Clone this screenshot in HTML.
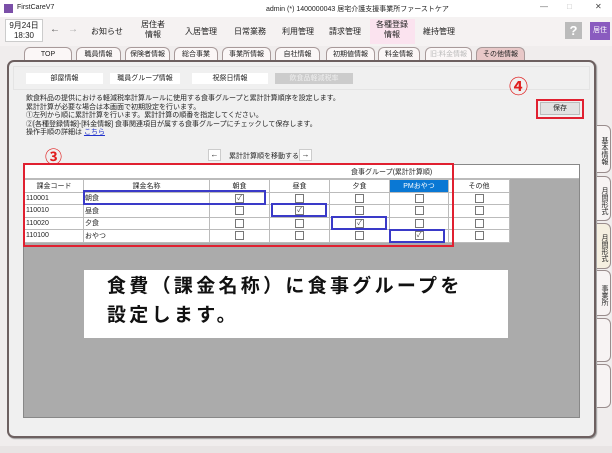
<!DOCTYPE html>
<html><head><meta charset="utf-8"><style>
*{margin:0;padding:0;box-sizing:border-box}
body{width:612px;height:453px;overflow:hidden;background:#f0eded;font-family:"Liberation Sans","Noto Sans CJK JP",sans-serif;position:relative;color:#222}
.a{position:absolute}
.t{font-size:8px;white-space:nowrap}
.tab{position:absolute;top:47px;height:14px;border:1px solid #a89a9a;border-bottom:none;border-radius:6px 6px 0 0;background:#fbf7f7;font-size:7px;text-align:center;line-height:13px}
.btn{position:absolute;top:73px;height:11px;background:#fff;font-size:7px;text-align:center;line-height:11px}
.cb{display:inline-block;width:9px;height:9px;border:1px solid #777;background:#fff;vertical-align:middle;font-size:7px;line-height:7px;text-align:center;color:#444}
table{border-collapse:collapse;font-size:7px}
td{border:1px solid #bbb;height:12.5px;padding:0 1px;background:#fff;white-space:nowrap}
.c{text-align:center}
.bl{position:absolute;border:2px solid #3a3ac8}
.vt{position:absolute;left:597px;width:14px;border:1px solid #9a8d8d;border-left:none;border-radius:0 6px 6px 0;background:#f7f3f3;font-size:7px;writing-mode:vertical-rl;text-align:center;padding-top:4px;line-height:12px}
</style></head><body>
<div class="a" style="left:0;top:0;width:612px;height:17px;background:#fff"></div>
<div class="a" style="left:4px;top:4px;width:9px;height:9px;background:#7b4fa8"></div>
<div class="a t" style="left:17px;top:4px;font-size:7px">FirstCareV7</div>
<div class="a t" style="left:266px;top:4px;font-size:7px">admin (*) 1400000043 居宅介護支援事業所ファーストケア</div>
<div class="a t" style="left:540px;top:2px;color:#666">—</div>
<div class="a t" style="left:567px;top:2px;color:#bbb">□</div>
<div class="a t" style="left:595px;top:2px;color:#444">✕</div>
<div class="a" style="left:0;top:17px;width:612px;height:29px;background:#f5f2f2"></div>
<div class="a" style="left:5px;top:19px;width:38px;height:23px;background:#fff;border:1px solid #ccc;font-size:8px;text-align:center;line-height:10px;padding-top:1px">9月24日<br>18:30</div>
<div class="a t" style="left:50px;top:24px;font-size:10px;color:#555">←</div>
<div class="a t" style="left:68px;top:24px;font-size:10px;color:#aaa">→</div>
<div class="a t" style="left:91px;top:26px">お知らせ</div>
<div class="a t" style="left:141px;top:20px;text-align:center;line-height:10px">居住者<br>情報</div>
<div class="a t" style="left:185px;top:26px">入居管理</div>
<div class="a t" style="left:234px;top:26px">日常業務</div>
<div class="a t" style="left:282px;top:26px">利用管理</div>
<div class="a t" style="left:329px;top:26px">請求管理</div>
<div class="a" style="left:370px;top:19px;width:45px;height:25px;background:#fbe3ef"></div>
<div class="a t" style="left:376px;top:20px;text-align:center;line-height:10px">各種登録<br>情報</div>
<div class="a t" style="left:423px;top:26px">維持管理</div>
<div class="a" style="left:565px;top:22px;width:17px;height:17px;background:#bbb;color:#fff;font-size:13px;text-align:center;line-height:17px;font-weight:bold">?</div>
<div class="a" style="left:590px;top:22px;width:20px;height:18px;background:#8a5bbf;color:#fff;font-size:7px;text-align:center;line-height:18px">居住</div>
<div class="tab" style="left:24px;width:48px">TOP</div>
<div class="tab" style="left:76px;width:45px">職員情報</div>
<div class="tab" style="left:125px;width:45px">保険者情報</div>
<div class="tab" style="left:174px;width:44px">総合事業</div>
<div class="tab" style="left:222px;width:49px">事業所情報</div>
<div class="tab" style="left:275px;width:45px">自社情報</div>
<div class="tab" style="left:326px;width:49px">初期値情報</div>
<div class="tab" style="left:378px;width:42px">料金情報</div>
<div class="tab" style="left:425px;width:47px;color:#bbb">旧:料金情報</div>
<div class="tab" style="left:476px;width:49px;background:#e8c8c8">その他情報</div>
<div class="a" style="left:7px;top:60px;width:589px;height:378px;border:2px solid #6d6060;border-radius:7px;background:#f0f0f0;box-shadow:1px 1px 1px #999"></div>
<div class="a" style="left:13px;top:66px;width:577px;height:24px;border:1px solid #e4e4e4"></div>
<div class="btn" style="left:26px;width:77px">部屋情報</div>
<div class="btn" style="left:110px;width:70px">職員グループ情報</div>
<div class="btn" style="left:192px;width:76px">祝祭日情報</div>
<div class="btn" style="left:275px;width:78px;background:#ccc;color:#eee">飲食品軽減税率</div>
<div class="a" style="left:26px;top:95px;font-size:7px;line-height:8.6px;white-space:nowrap">飲食料品の提供における軽減税率計算ルールに使用する食事グループと累計計算順序を設定します。<br>累計計算が必要な場合は本画面で初期設定を行います。<br>①左列から順に累計計算を行います。累計計算の順番を指定してください。<br>②[各種登録情報]-[料金情報] 食事関連項目が属する食事グループにチェックして保存します。<br>操作手順の詳細は <span style="color:#2233cc;text-decoration:underline">こちら</span></div>
<div class="a" style="left:45px;top:143px;color:#e02020;font-size:17px;font-weight:bold">③</div>
<div class="a" style="left:509px;top:72px;color:#e02020;font-size:19px;font-weight:bold">④</div>
<div class="a" style="left:536px;top:99px;width:48px;height:20px;border:2px solid #e02030"></div>
<div class="a" style="left:540px;top:102px;width:40px;height:13px;background:#e2e2e2;border:1px solid #bbb;font-size:7px;text-align:center;line-height:11px">保存</div>
<div class="a" style="left:208px;top:149px;width:13px;height:12px;background:#fff;border:1px solid #ccc;font-size:8px;text-align:center;line-height:10px">←</div>
<div class="a t" style="left:229px;top:151px;font-size:7px">累計計算順を移動する</div>
<div class="a" style="left:299px;top:149px;width:13px;height:12px;background:#fff;border:1px solid #ccc;font-size:8px;text-align:center;line-height:10px">→</div>
<div class="a" style="left:23px;top:164px;width:557px;height:254px;background:#ababab;border:1px solid #888"></div>
<div class="a" style="left:24px;top:165px;width:555px;height:14px;background:#fff;border-bottom:1px solid #bbb"></div>
<div class="a t" style="left:351px;top:167px;font-size:7px">食事グループ(累計計算順)</div>
<div class="a" style="left:24px;top:179px">
<table>
<tr><td style="width:59px" class="c">課金コード</td><td style="width:126px" class="c">課金名称</td><td style="width:60px" class="c">朝食</td><td style="width:60px" class="c">昼食</td><td style="width:60px" class="c">夕食</td><td style="width:59px;background:#0a78d4;color:#fff" class="c">PMおやつ</td><td style="width:61px" class="c">その他</td></tr>
<tr><td>110001</td><td>朝食</td><td class="c"><span class="cb">✓</span></td><td class="c"><span class="cb"></span></td><td class="c"><span class="cb"></span></td><td class="c"><span class="cb"></span></td><td class="c"><span class="cb"></span></td></tr>
<tr><td>110010</td><td>昼食</td><td class="c"><span class="cb"></span></td><td class="c"><span class="cb">✓</span></td><td class="c"><span class="cb"></span></td><td class="c"><span class="cb"></span></td><td class="c"><span class="cb"></span></td></tr>
<tr><td>110020</td><td>夕食</td><td class="c"><span class="cb"></span></td><td class="c"><span class="cb"></span></td><td class="c"><span class="cb">✓</span></td><td class="c"><span class="cb"></span></td><td class="c"><span class="cb"></span></td></tr>
<tr><td>110100</td><td>おやつ</td><td class="c"><span class="cb"></span></td><td class="c"><span class="cb"></span></td><td class="c"><span class="cb"></span></td><td class="c"><span class="cb">✓</span></td><td class="c"><span class="cb"></span></td></tr>
</table></div>
<div class="bl" style="left:83px;top:190px;width:183px;height:15px"></div>
<div class="bl" style="left:271px;top:203px;width:56px;height:14px"></div>
<div class="bl" style="left:331px;top:216px;width:56px;height:14px"></div>
<div class="bl" style="left:389px;top:229px;width:56px;height:14px"></div>
<div class="a" style="left:23px;top:163px;width:431px;height:84px;border:2px solid #e02030"></div>
<div class="a" style="left:84px;top:270px;width:424px;height:68px;background:#fff"></div>
<div class="a" style="left:107px;top:272px;font-size:19px;line-height:29px;font-weight:bold;letter-spacing:3.3px;white-space:nowrap;color:#111">食費（課金名称）に食事グループを<br>設定します。</div>
<div class="vt" style="top:125px;height:48px">基本情報</div>
<div class="vt" style="top:176px;height:45px">月間形式</div>
<div class="vt" style="top:223px;height:46px;background:#f5efe0">月間形式</div>
<div class="vt" style="top:270px;height:46px">事業所</div>
<div class="vt" style="top:318px;height:44px"></div>
<div class="vt" style="top:364px;height:44px"></div>
<div class="a" style="left:0;top:446px;width:612px;height:7px;background:#e8e4e4"></div>
</body></html>
